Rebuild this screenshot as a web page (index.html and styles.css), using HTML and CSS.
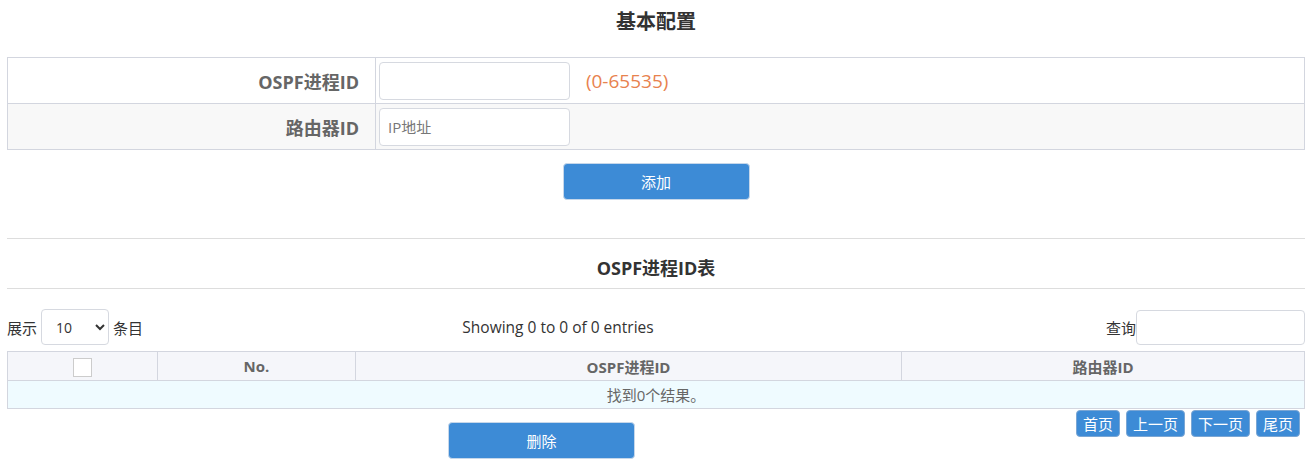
FILE: index.html
```html
<!DOCTYPE html>
<html lang="zh-CN">
<head>
    <meta charset="UTF-8">
    <meta name="viewport" content="width=device-width, initial-scale=1.0">
    <title>OSPF配置</title>
    <link rel="stylesheet" href="styles.css">
</head>
<body>
    <div class="page">
        <h2 class="section-title">基本配置</h2>
        <table class="form-table">
            <tr>
                <th>OSPF进程ID</th>
                <td>
                    <input type="text" class="text-input">
                    <span class="hint">(0-65535)</span>
                </td>
            </tr>
            <tr class="alt">
                <th>路由器ID</th>
                <td>
                    <input type="text" class="text-input" placeholder="IP地址">
                </td>
            </tr>
        </table>
        <div class="actions">
            <button class="btn">添加</button>
        </div>

        <div class="list-title">OSPF进程ID表</div>

        <div class="toolbar">
            <div class="length">
                展示
                <select class="length-select">
                    <option>10</option>
                    <option>25</option>
                    <option>50</option>
                </select>
                条目
            </div>
            <div class="info">Showing 0 to 0 of 0 entries</div>
            <div class="search">
                查询<input type="text" class="search-input">
            </div>
        </div>

        <table class="data-table">
            <thead>
                <tr>
                    <th class="col-check"><span class="checkbox"></span></th>
                    <th class="col-no">No.</th>
                    <th class="col-id">OSPF进程ID</th>
                    <th>路由器ID</th>
                </tr>
            </thead>
            <tbody>
                <tr>
                    <td colspan="4" class="empty">找到0个结果。</td>
                </tr>
            </tbody>
        </table>

        <div class="bottom">
            <div class="bottom-left">
                <button class="btn">删除</button>
            </div>
            <div class="pager">
                <button class="page-btn">首页</button>
                <button class="page-btn">上一页</button>
                <button class="page-btn">下一页</button>
                <button class="page-btn">尾页</button>
            </div>
        </div>
    </div>
</body>
</html>
```

FILE: styles.css
```css
body {
    margin: 0;
    font-family: "Open Sans", "Noto Sans CJK SC", sans-serif;
    font-size: 15px;
    color: #333;
    background: #fff;
}

.page {
    padding: 0 8px 0 7px;
}

.section-title {
    margin: 0;
    padding: 6px 0 0;
    height: 57px;
    box-sizing: border-box;
    text-align: center;
    font-size: 20px;
    font-weight: bold;
    color: #333;
}

.form-table {
    width: 100%;
    border-collapse: collapse;
    border: 1px solid #d3d6df;
}

.form-table th,
.form-table td {
    border: 1px solid #d3d6df;
    height: 45px;
    padding: 0;
}

.form-table th {
    width: 351px;
    padding-right: 16px;
    text-align: right;
    font-size: 18px;
    font-weight: bold;
    color: #666;
}

.form-table td {
    padding-left: 3px;
}

.form-table tr.alt {
    background: #f8f8f8;
}

.text-input {
    width: 191px;
    height: 38px;
    box-sizing: border-box;
    padding: 0 8px;
    border: 1px solid #d6d9e0;
    border-radius: 4px;
    font-family: inherit;
    font-size: 15px;
    color: #333;
    background: #fff;
    vertical-align: middle;
}

.text-input::placeholder {
    color: #777;
}

.hint {
    margin-left: 12px;
    font-size: 19px;
    color: #e8824e;
    vertical-align: middle;
}

.actions {
    display: flex;
    justify-content: center;
    padding: 13px 0 38px;
    border-bottom: 1px solid #ddd;
}

.btn {
    width: 187px;
    height: 37px;
    border: 1px solid #c6d7ea;
    border-radius: 4px;
    background: #3d8bd6;
    color: #fff;
    font-family: inherit;
    font-size: 15px;
    cursor: pointer;
}

.list-title {
    height: 50px;
    box-sizing: border-box;
    padding-top: 15px;
    text-align: center;
    font-size: 18px;
    font-weight: bold;
    color: #333;
    border-bottom: 1px solid #ddd;
}

.toolbar {
    display: flex;
    align-items: center;
    justify-content: space-between;
    padding: 20px 0 6px;
}

.length {
    flex: 1;
    display: flex;
    align-items: center;
    gap: 4px;
}

.length-select {
    width: 68px;
    height: 36px;
    padding: 0 6px 0 10px;
    border: 1px solid #d6d9e0;
    border-radius: 4px;
    background: #fff;
    font-family: inherit;
    font-size: 14px;
    color: #333;
}

.info {
    flex: 1;
    text-align: center;
    font-size: 15.5px;
    margin-left: -196px;
}

.search {
    flex: 1;
    display: flex;
    align-items: center;
    justify-content: flex-end;
}

.search-input {
    width: 169px;
    height: 35px;
    box-sizing: border-box;
    border: 1px solid #d6d9e0;
    border-radius: 4px;
}

.data-table {
    width: 100%;
    border-collapse: collapse;
    border: 1px solid #d3d6df;
}

.data-table th,
.data-table td {
    border: 1px solid #d3d6df;
    padding: 0;
}

.data-table th {
    height: 28px;
    background: #f5f6fa;
    font-size: 15px;
    font-weight: bold;
    color: #666;
}

.col-check {
    width: 149px;
}

.col-no {
    width: 197px;
}

.col-id {
    width: 545px;
}

.checkbox {
    display: inline-block;
    width: 17px;
    height: 17px;
    border: 1px solid #ccc;
    background: #fff;
    vertical-align: middle;
}

.data-table td.empty {
    height: 27px;
    background: #effbff;
    text-align: center;
    font-size: 15px;
    color: #666;
}

.bottom {
    display: flex;
    align-items: flex-start;
}

.bottom-left {
    flex: 1;
    display: flex;
    justify-content: center;
    padding-top: 13px;
}

.pager {
    display: flex;
    gap: 6px;
    padding: 1px 5px 0 0;
}

.page-btn {
    height: 27px;
    padding: 0 6px;
    border: 1px solid #7aa6d4;
    border-radius: 4px;
    background: #3d8bd6;
    color: #fff;
    font-family: inherit;
    font-size: 15px;
    cursor: pointer;
}
```
